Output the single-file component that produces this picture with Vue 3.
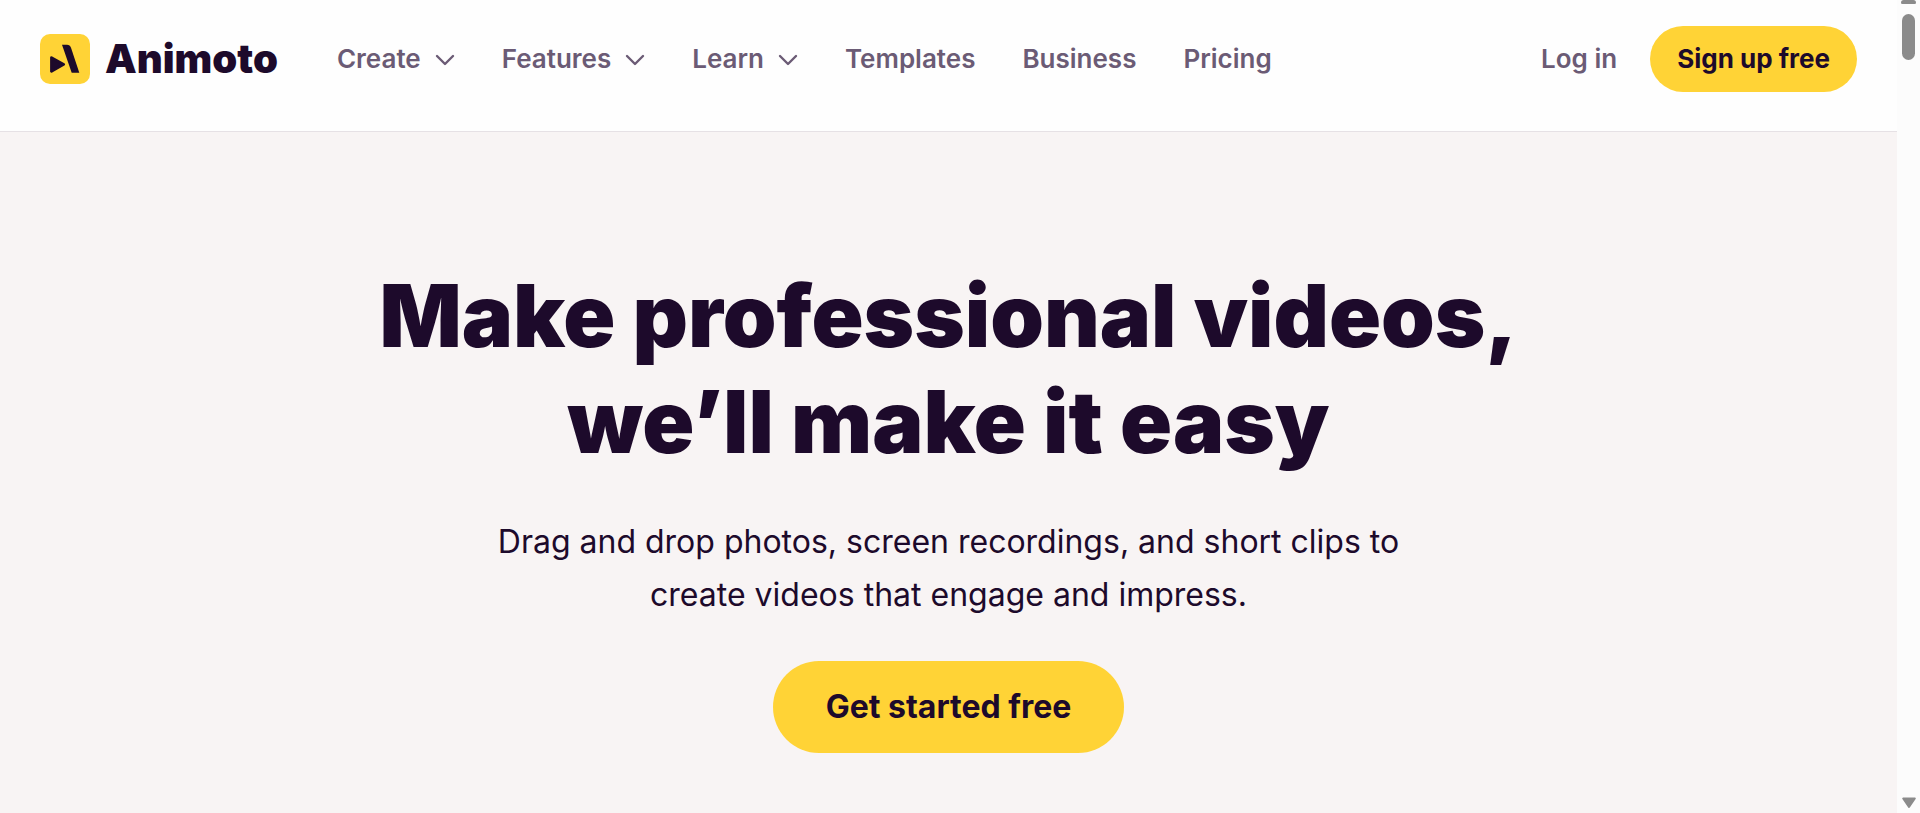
<script setup>
const links = [
  { label: 'Create', menu: true },
  { label: 'Features', menu: true },
  { label: 'Learn', menu: true },
  { label: 'Templates', menu: false },
  { label: 'Business', menu: false },
  { label: 'Pricing', menu: false },
]
</script>

<template>
  <div class="window">
    <div class="page">
      <header class="header">
        <a class="brand" href="#" aria-label="Animoto">
          <svg class="mark" viewBox="0 0 50 50" aria-hidden="true">
            <rect width="50" height="50" rx="10" fill="#ffd336" />
            <path d="M22 10.7h5q3 0 4 3l8.3 25.1h-7.6z" fill="#1d0a2b" />
            <path d="M11.5 23.6l12.2 6.8L11.5 37.4z" fill="#1d0a2b" stroke="#1d0a2b" stroke-width="2.8" stroke-linejoin="round" />
          </svg>
          <span class="wordmark">Animoto</span>
        </a>
        <nav class="nav">
          <template v-for="link in links" :key="link.label">
            <button v-if="link.menu" type="button" class="nav-item">
              {{ link.label }}
              <svg class="chevron" viewBox="0 0 20 12" aria-hidden="true">
                <path d="M2 2l8 8 8-8" fill="none" stroke="currentColor" stroke-width="2.4" stroke-linecap="round" stroke-linejoin="round" />
              </svg>
            </button>
            <a v-else class="nav-item" href="#">{{ link.label }}</a>
          </template>
        </nav>
        <div class="account">
          <a class="nav-item" href="#">Log in</a>
          <a class="pill signup" href="#">Sign up free</a>
        </div>
      </header>
      <main class="hero">
        <h1>Make professional videos,<br />we’ll make it easy</h1>
        <p>Drag and drop photos, screen recordings, and short clips to<br />create videos that engage and impress.</p>
        <a class="pill start" href="#">Get started free</a>
      </main>
    </div>
    <div class="scrollbar" aria-hidden="true">
      <div class="stub"></div>
      <div class="thumb"></div>
      <svg class="arrow" viewBox="0 0 16 12">
        <path d="M2.2 1.5h11.6L8 10z" fill="#8b8b8b" stroke="#8b8b8b" stroke-width="2" stroke-linejoin="round" />
      </svg>
    </div>
  </div>
</template>

<style>
body {
  margin: 0;
}
</style>

<style scoped>
.window {
  display: flex;
  height: 100vh;
  overflow: hidden;
  background: #f8f4f4;
  color: #1d0a2b;
  font-family: Inter, "Liberation Sans", sans-serif;
}
.page {
  flex: 1;
  min-width: 0;
}
.header {
  display: flex;
  align-items: center;
  padding: 26px 40px 39px;
  background: #fefefe;
  border-bottom: 1px solid #e6e1e5;
}
.brand {
  display: flex;
  align-items: center;
  gap: 15px;
  color: inherit;
  text-decoration: none;
}
.mark {
  width: 50px;
  height: 50px;
}
.wordmark {
  font-size: 40px;
  line-height: 50px;
  font-weight: 900;
}
.nav {
  display: flex;
  gap: 47px;
  margin-left: 59px;
}
.nav-item {
  display: flex;
  align-items: center;
  gap: 14px;
  padding: 0;
  border: 0;
  background: none;
  color: #6b5b75;
  font-family: inherit;
  font-size: 26px;
  line-height: 32px;
  font-weight: 600;
  text-decoration: none;
  white-space: nowrap;
}
.chevron {
  width: 20px;
  height: 12px;
  margin-top: 2px;
}
.account {
  display: flex;
  align-items: center;
  gap: 33px;
  margin-left: auto;
}
.pill {
  border-radius: 48px;
  background: #ffd336;
  color: #1d0a2b;
  font-weight: 700;
  text-decoration: none;
  white-space: nowrap;
}
.signup {
  padding: 17px 27px;
  font-size: 26px;
  line-height: 32px;
}
.hero {
  display: flex;
  flex-direction: column;
  align-items: center;
  gap: 40px;
  padding: 131px 40px 60px;
  text-align: center;
}
h1 {
  margin: 0;
  font-size: 86px;
  line-height: 106px;
  font-weight: 900;
}
p {
  margin: 0;
  font-size: 32px;
  line-height: 53px;
}
.start {
  padding: 26px 53px;
  font-size: 32px;
  line-height: 40px;
}
.scrollbar {
  display: flex;
  flex-direction: column;
  align-items: center;
  width: 23px;
  background: #fcfcfc;
}
.stub {
  width: 15px;
  height: 4px;
  border-radius: 4px 4px 2px 2px;
  background: #8b8b8b;
}
.thumb {
  width: 13px;
  height: 46px;
  margin-top: 10px;
  border-radius: 7px;
  background: #8b8b8b;
}
.arrow {
  width: 16px;
  height: 12px;
  margin-top: auto;
  margin-bottom: 4px;
}
</style>
